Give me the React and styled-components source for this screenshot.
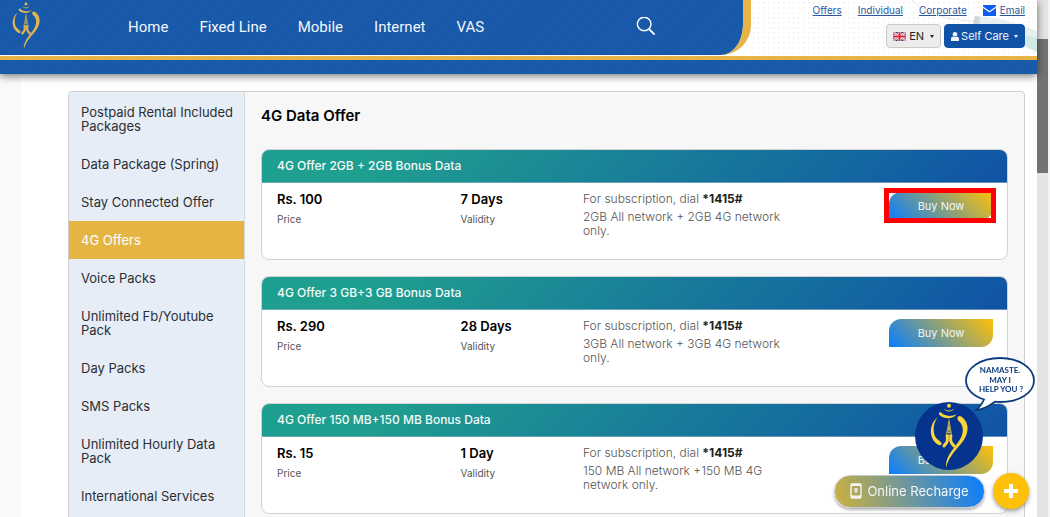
import styled, { createGlobalStyle, css } from 'styled-components';

const GlobalStyle = createGlobalStyle`
    * {
        box-sizing: border-box;
    }

    body {
        margin: 0;
        height: 100vh;
        overflow: hidden;
        background: #fff;
        color: #212529;
        font-family: Inter, "Liberation Sans", sans-serif;
    }

    button {
        font-family: inherit;
        cursor: pointer;
    }
`;

const Window = styled.div`
    display: flex;
    height: 100vh;
    overflow: hidden;
`;

const Page = styled.div`
    flex: 1;
    min-width: 0;
`;

const ScrollTrack = styled.div`
    flex: 0 0 13px;
    padding: 39px 0 0;
    background: #e4e4e4;
    border-right: 2px solid #f4f4f4;
`;

const ScrollThumb = styled.div`
    height: 134px;
    background: #737373;
`;

/* Header */

const stripes = css`
    background: repeating-linear-gradient(135deg, #1a5bab 0 1px, #1858a9 1px 3px);
`;

const Header = styled.header`
    position: relative;
    z-index: 1;
    box-shadow: 0 2px 8px rgba(0, 0, 0, 0.55);
`;

const HeaderTop = styled.div`
    display: flex;
    height: 56px;
    border-bottom: 1px solid #fff;
    background: #fff;
`;

const NavBar = styled.div`
    flex: 1;
    display: flex;
    align-items: center;
    padding: 0 87px 2px 11px;
    border-right: 8px solid #e7b546;
    border-radius: 0 0 30px 0;
    ${stripes}
    background-clip: padding-box;
`;

const LogoLink = styled.a`
    display: flex;
    width: 30px;
    margin-right: 87px;
`;

const Nav = styled.nav`
    display: flex;
    flex: 1;
    gap: 31px;
`;

const NavLink = styled.a`
    color: #f2f6fb;
    font: 15px/20px Roboto, sans-serif;
    text-decoration: none;
`;

const SearchButton = styled.button`
    display: flex;
    padding: 0;
    border: 0;
    background: none;
    color: #fff;
`;

const Utilities = styled.div`
    position: relative;
    flex: 0 0 286px;
    display: flex;
    flex-direction: column;
    align-items: flex-end;
    gap: 6px;
    padding: 2px 12px 0 0;
    background: radial-gradient(circle, #f3f3f3 1px, transparent 1px) 0 0 / 5px 5px;
`;

const Decoration = styled.svg`
    position: absolute;
    right: 0;
    top: 0;
`;

const UtilityLinks = styled.div`
    position: relative;
    display: flex;
    gap: 16px;
`;

const UtilityLink = styled.a`
    display: flex;
    align-items: center;
    gap: 4px;
    color: #2c57a0;
    font-size: 10px;
    line-height: 16px;
    text-decoration: underline;
`;

const UtilityButtons = styled.div`
    position: relative;
    display: flex;
    gap: 3px;
`;

const DropButton = styled.button`
    display: flex;
    align-items: center;
    gap: ${({ $primary }) => ($primary ? 2 : 3)}px;
    height: 24px;
    padding: 0 6px;
    border: 1px solid ${({ $primary }) => ($primary ? '#1053a6' : '#c9c9c9')};
    border-radius: 4px;
    background: ${({ $primary }) => ($primary ? '#1053a6' : '#ececec')};
    color: ${({ $primary }) => ($primary ? '#f1f5fa' : '#212529')};
    font-size: 11px;
`;

const Caret = styled.span`
    margin-left: 3px;
    border: 2px solid transparent;
    border-top: 3px solid currentColor;
    border-bottom: 0;
`;

const HeaderBand = styled.div`
    height: 18px;
    border-top: 4px solid #e7b546;
    ${stripes}
    background-clip: padding-box;
`;

/* Content */

const Main = styled.main`
    margin-top: -1px;
    padding: 18px 12px 0 47px;
    border-left: 21px solid #fafafa;
`;

const Panel = styled.div`
    display: flex;
    border: 1px solid #cfcfcf;
    border-radius: 4px;
    background: #f7f7f7;
    overflow: hidden;
`;

const Sidebar = styled.nav`
    flex: 0 0 176px;
    padding-top: 1px;
    border-right: 1px solid #d3d6d9;
    background: #e6edf6;
`;

const SideLink = styled.a`
    display: block;
    padding: 12px 9px 12px 12px;
    background: ${({ $active }) => ($active ? '#e5b544' : 'transparent')};
    color: ${({ $active }) => ($active ? '#fff' : '#2b2f33')};
    font-size: 13px;
    line-height: 14px;
    text-decoration: none;
`;

const Content = styled.section`
    flex: 1;
    min-width: 0;
    padding: 13px 16px 16px;
`;

const Title = styled.h1`
    margin: 0 0 22px;
    color: #000;
    font-size: 15px;
    font-weight: 600;
    line-height: 22px;
`;

const CardList = styled.div`
    display: grid;
    gap: 16px;
`;

const Card = styled.article`
    min-height: 111px;
    border: 1px solid #d2d2d2;
    border-radius: 8px;
    background: #fff;
    overflow: hidden;
`;

const CardHeader = styled.h2`
    margin: 0;
    padding: 0 15px;
    border-bottom: 1px solid rgba(160, 180, 200, 0.6);
    background: linear-gradient(135deg, #1f9f8f 15%, #1053a6 100%);
    color: #f4faf9;
    font-size: 12px;
    font-weight: 500;
    line-height: 32px;
`;

const CardBody = styled.div`
    display: grid;
    grid-template-columns: 3fr 2fr 5fr 104px;
    align-items: start;
    padding: 7px 14px 7px 15px;
`;

const Value = styled.strong`
    display: block;
    color: #000;
    font-size: 13px;
    font-weight: 600;
    line-height: 18px;
`;

const Label = styled.span`
    display: block;
    margin-top: 3px;
    color: #555;
    font-size: 10px;
    line-height: 16px;
`;

const Details = styled.div`
    max-width: 212px;
    color: #555;
    font-size: 12px;
    font-weight: 300;
    line-height: 14px;

    p {
        margin: 2px 0 4px;
    }

    b {
        color: #222;
        font-weight: 700;
    }
`;

const BuySlot = styled.div`
    position: relative;
    margin-top: 2px;

    ${({ $marked }) => $marked && css`
        &::after {
            content: "";
            position: absolute;
            inset: -4px -3px -3px -5px;
            border: 5px solid #f00;
            pointer-events: none;
        }
    `}
`;

const BuyButton = styled.button`
    display: block;
    width: 100%;
    height: 28px;
    padding: 0;
    border: 0;
    border-radius: 12px 0 12px 0;
    background: linear-gradient(45deg, #087dff, #ffc107);
    color: #f4f4f4;
    font-size: 11px;
`;

/* Floating helpers */

const Help = styled.button`
    position: fixed;
    right: 15px;
    bottom: 46px;
    z-index: 2;
    padding: 0;
    border: 0;
    background: none;
    line-height: 0;
`;

const Actions = styled.div`
    position: fixed;
    right: 21px;
    bottom: 8px;
    z-index: 3;
    display: flex;
    align-items: center;
    gap: 8px;
`;

const RechargeButton = styled.button`
    display: flex;
    align-items: center;
    justify-content: center;
    gap: 5px;
    width: 151px;
    height: 33px;
    padding: 0;
    border: 1px solid #c3c8cc;
    border-radius: 17px;
    background: linear-gradient(70deg, #d0b03c, #087dff);
    box-shadow: 0 2px 3px rgba(0, 0, 0, 0.3);
    color: #f6f6f6;
    font-size: 13px;
`;

const PlusButton = styled.button`
    display: grid;
    place-items: center;
    width: 36px;
    height: 36px;
    padding: 0;
    border: 0;
    border-radius: 50%;
    background: #ffc107;
    box-shadow: 0 2px 4px rgba(0, 0, 0, 0.4);
`;

const navItems = ['Home', 'Fixed Line', 'Mobile', 'Internet', 'VAS'];

const packages = [
    'Postpaid Rental Included Packages',
    'Data Package (Spring)',
    'Stay Connected Offer',
    '4G Offers',
    'Voice Packs',
    'Unlimited Fb/Youtube Pack',
    'Day Packs',
    'SMS Packs',
    'Unlimited Hourly Data Pack',
    'International Services',
];

const offers = [
    {
        name: '4G Offer 2GB + 2GB Bonus Data',
        price: 'Rs. 100',
        validity: '7 Days',
        details: '2GB All network + 2GB 4G network only.',
        marked: true,
    },
    {
        name: '4G Offer 3 GB+3 GB Bonus Data',
        price: 'Rs. 290',
        validity: '28 Days',
        details: '3GB All network + 3GB 4G network only.',
    },
    {
        name: '4G Offer 150 MB+150 MB Bonus Data',
        price: 'Rs. 15',
        validity: '1 Day',
        details: '150 MB All network +150 MB 4G network only.',
    },
];

// Two hands joined under a tower, used in the header and in the help badge
function Emblem({ color, ...rest }) {
    return (
        <svg viewBox="0 0 120 200" fill={color} {...rest}>
            <circle cx="60" cy="8" r="6" />
            <path d="M45 17c8 7 21 7 30 0-5 10-24 12-30 0z" />
            <path d="M31 28c4-4 9 4 15 7 11 5 24 4 37-2-8 12-27 15-41 9-8-3-15-9-11-14z" />
            <path d="M26 43C12 60 10 88 21 104c5 7 12 9 16 15 3 6-3 9-9 6C-2 108-1 62 26 43z" />
            <path d="M86 48c-3-8 5-12 12-7 22 17 23 45 6 70-17 25-44 44-53 83-3-38 29-61 43-87 10-19 10-37-1-50-3-3-6-5-7-9z" />
            <path
                d="M60 48v52M60 54l-9 46M60 54l9 46M56 78h8M54 88h12M57 68l8 20M63 68l-8 20"
                fill="none"
                stroke={color}
                strokeWidth="2"
            />
            <path
                d="M55 98v15c-1 6-5 10-10 15M65 98v15c1 6 5 10 10 15"
                fill="none"
                stroke={color}
                strokeWidth="9"
                strokeLinecap="round"
            />
        </svg>
    );
}

function Flag() {
    return (
        <svg width="13" height="9" viewBox="0 0 26 18">
            <path d="M0 0h26v18H0z" fill="#263b80" />
            <path d="M0 0l26 18M26 0L0 18" stroke="#fff" strokeWidth="4" />
            <path d="M0 0l26 18M26 0L0 18" stroke="#d8233c" strokeWidth="1.5" />
            <path d="M13 0v18M0 9h26" stroke="#fff" strokeWidth="7" />
            <path d="M13 0v18M0 9h26" stroke="#d8233c" strokeWidth="4" />
        </svg>
    );
}

function TopHeader() {
    return (
        <Header>
            <HeaderTop>
                <NavBar>
                    <LogoLink href="#" aria-label="Home page">
                        <Emblem color="#e3b54c" width="30" height="49" />
                    </LogoLink>
                    <Nav>
                        {navItems.map((item) => (
                            <NavLink href="#" key={item}>{item}</NavLink>
                        ))}
                    </Nav>
                    <SearchButton aria-label="Search">
                        <svg width="20" height="20" viewBox="0 0 20 20" fill="none" stroke="currentColor" strokeWidth="1.4">
                            <circle cx="8.2" cy="7" r="6.8" />
                            <path d="M13 12l5.6 5.6" strokeWidth="1.8" />
                        </svg>
                    </SearchButton>
                </NavBar>
                <Utilities>
                    <Decoration width="125" height="55" viewBox="0 0 125 55" fill="none">
                        <path d="M0 0c15 15 36 20 62 21" stroke="#e3e9ea" />
                        <path d="M63 16c18 0 38 6 62 15v21c-19-8-39-18-63-28z" fill="#e6f0f0" />
                        <path d="M63 16l-2 8 6 2 1-9z" fill="#ccd7d9" />
                        <path d="M108 34l17 4v14l-17-8z" fill="#d2e8e5" />
                    </Decoration>
                    <UtilityLinks>
                        <UtilityLink href="#">Offers</UtilityLink>
                        <UtilityLink href="#">Individual</UtilityLink>
                        <UtilityLink href="#">Corporate</UtilityLink>
                        <UtilityLink href="#">
                            <svg width="13" height="11" viewBox="0 0 13 11" fill="#0b5cf0">
                                <path d="M0 0h13v1.4L6.5 6 0 1.4z" />
                                <path d="M0 3l6.5 4.5L13 3v8H0z" />
                            </svg>
                            Email
                        </UtilityLink>
                    </UtilityLinks>
                    <UtilityButtons>
                        <DropButton>
                            <Flag />
                            EN
                            <Caret />
                        </DropButton>
                        <DropButton $primary>
                            <svg width="8" height="9" viewBox="0 0 8 9" fill="currentColor">
                                <circle cx="4" cy="2.3" r="2.3" />
                                <path d="M0 9V7c0-1.5 1-2.5 2-2.5 1 .8 3 .8 4 0 1 0 2 1 2 2.5v2z" />
                            </svg>
                            Self Care
                            <Caret />
                        </DropButton>
                    </UtilityButtons>
                </Utilities>
            </HeaderTop>
            <HeaderBand />
        </Header>
    );
}

function OfferCard({ offer }) {
    return (
        <Card>
            <CardHeader>{offer.name}</CardHeader>
            <CardBody>
                <div>
                    <Value>{offer.price}</Value>
                    <Label>Price</Label>
                </div>
                <div>
                    <Value>{offer.validity}</Value>
                    <Label>Validity</Label>
                </div>
                <Details>
                    <p>For subscription, dial <b>*1415#</b></p>
                    {offer.details}
                </Details>
                <BuySlot $marked={offer.marked}>
                    <BuyButton>Buy Now</BuyButton>
                </BuySlot>
            </CardBody>
        </Card>
    );
}

function HelpBadge() {
    return (
        <Help aria-label="Help">
            <svg width="120" height="115" viewBox="0 0 120 115">
                <circle cx="34" cy="80" r="34" fill="#05338d" />
                <Emblem color="#f9d53c" x="14" y="47" width="40" height="67" />
                <path
                    d="M85 2c19 0 34 10 34 22.5S104 46 85 46c-2 0-4 0-5-.3C74 50 67 54 61 54c4-3 6-6 8-10.5C58 40 51 33 51 24.5 51 12 66 2 85 2z"
                    fill="#fff"
                    stroke="#0c3c7c"
                    strokeWidth="1.8"
                />
                <g fill="#0c3c7c" fontFamily="Lato, sans-serif" fontSize="8" fontWeight="700" textAnchor="middle">
                    <text x="85" y="17">NAMASTE.</text>
                    <text x="85" y="27">MAY I</text>
                    <text x="86" y="36">HELP YOU ?</text>
                </g>
            </svg>
        </Help>
    );
}

export default function App() {
    return (
        <Window>
            <GlobalStyle />
            <Page>
                <TopHeader />
                <Main>
                    <Panel>
                        <Sidebar>
                            {packages.map((name) => (
                                <SideLink href="#" key={name} $active={name === '4G Offers'}>{name}</SideLink>
                            ))}
                        </Sidebar>
                        <Content>
                            <Title>4G Data Offer</Title>
                            <CardList>
                                {offers.map((offer) => (
                                    <OfferCard key={offer.name} offer={offer} />
                                ))}
                            </CardList>
                        </Content>
                    </Panel>
                </Main>
            </Page>
            <ScrollTrack>
                <ScrollThumb />
            </ScrollTrack>
            <HelpBadge />
            <Actions>
                <RechargeButton>
                    <svg width="12" height="16" viewBox="0 0 12 16" fill="none" stroke="currentColor">
                        <rect x="1" y="1" width="10" height="14" rx="1" strokeWidth="1.4" />
                        <path d="M1 2h10M1 13.5h10" strokeWidth="2" />
                        <path d="M4 6h4M4 8h4M6 5v5" />
                    </svg>
                    Online Recharge
                </RechargeButton>
                <PlusButton aria-label="More">
                    <svg width="16" height="16" viewBox="0 0 16 16" stroke="#fff" strokeWidth="4">
                        <path d="M8 1v14M1 8h14" />
                    </svg>
                </PlusButton>
            </Actions>
        </Window>
    );
}
